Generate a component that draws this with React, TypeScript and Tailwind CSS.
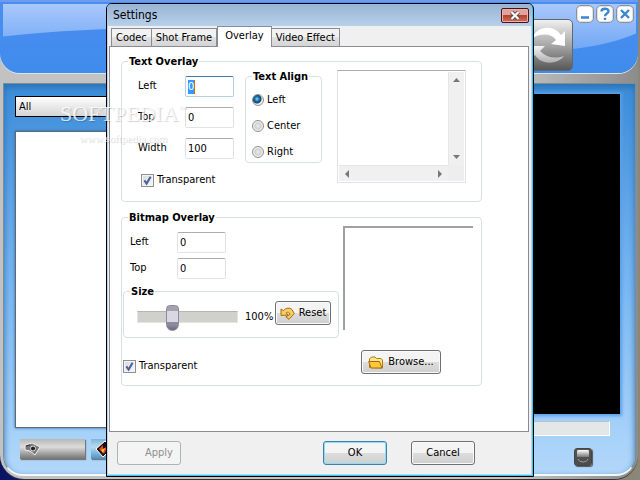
import React, { useState } from 'react';

const TABS = ['Codec', 'Shot Frame', 'Overlay', 'Video Effect'];
const ALIGNS = ['Left', 'Center', 'Right'];

const buttonBase =
  'flex items-center justify-center gap-1 h-6 rounded-[3px] border bg-linear-to-b from-[#f4f4f4] from-50% via-[#dddddd] via-50% to-[#cfcfcf]';
const buttonStyle = `${buttonBase} border-[#707070] shadow-[inset_0_0_0_1px_#fafafa]`;
const defaultButtonStyle = `${buttonBase} border-[#3c7fb1] shadow-[inset_0_0_0_1px_#8fdcf6]`;

interface FieldProps {
  id: string;
  label: string;
  value: string;
  onChange: (value: string) => void;
  active?: boolean;
}

function Field({ id, label, value, onChange, active }: FieldProps) {
  return (
    <div className="flex items-start">
      <label htmlFor={id} className="w-[47px] leading-5">{label}</label>
      <div
        className={
          active
            ? 'flex items-center w-[49px] h-[21px] border border-[#b5cfe7] border-t-[#3d7bad] rounded-[2px] bg-white px-[2px]'
            : 'flex items-center w-[49px] h-[21px] border border-[#dfe3e9] border-t-[#abadb3] rounded-[2px] bg-white px-[2px]'
        }
      >
        <input
          id={id}
          type="text"
          className={
            active
              ? 'w-[7px] h-[14px] outline-none bg-[#3399ff] text-white border-r border-[#c87000]'
              : 'w-full h-[14px] outline-none'
          }
          value={value}
          onChange={(e) => onChange(e.target.value)}
        />
      </div>
    </div>
  );
}

function CheckBox({ id, label }: { id: string; label: string }) {
  const [checked, setChecked] = useState(true);

  return (
    <div className="flex items-center gap-[3px] h-[14px]">
      <span className="relative block size-[13px]">
        <input
          id={id}
          type="checkbox"
          className="block appearance-none size-[13px] border border-[#8e8f8f] bg-linear-to-br from-[#d5d9de] to-[#f8f8f8] shadow-[inset_0_0_0_1px_#f4f4f4]"
          checked={checked}
          onChange={(e) => setChecked(e.target.checked)}
        />
        {checked && (
          <svg viewBox="0 0 13 13" className="absolute inset-0 pointer-events-none" fill="none">
            <path d="M3.4 6.4 L5.6 9.6 L9.6 2.8" stroke="#4a5f97" strokeWidth="2" />
          </svg>
        )}
      </span>
      <label htmlFor={id}>{label}</label>
    </div>
  );
}

function Group({ title, className, children }: { title: string; className: string; children: React.ReactNode }) {
  return (
    <fieldset className={`min-w-0 border border-[#d5dfe5] rounded-[4px] ${className}`}>
      <legend className="ml-[6px] px-px h-[15px] leading-[15px] font-bold">{title}</legend>
      {children}
    </fieldset>
  );
}

function TextOverlay() {
  const [left, setLeft] = useState('0');
  const [top, setTop] = useState('0');
  const [width, setWidth] = useState('100');
  const [align, setAlign] = useState('Left');

  return (
    <Group title="Text Overlay" className="h-[148px]">
      <div className="flex">
        <div className="flex flex-col gap-[10px] pl-4 pt-[7px]">
          <Field id="text-left" label="Left" value={left} onChange={setLeft} active />
          <Field id="text-top" label="Top" value={top} onChange={setTop} />
          <Field id="text-width" label="Width" value={width} onChange={setWidth} />
          <div className="pl-[3px] pt-[4px]">
            <CheckBox id="text-transparent" label="Transparent" />
          </div>
        </div>
        <Group title="Text Align" className="ml-[11px] w-[77px] h-[94px]">
          <div className="flex flex-col gap-[12px] pt-[9px] pl-[6px]">
            {ALIGNS.map((name) => (
              <label key={name} className="flex items-center gap-[3px] h-[14px]">
                <input
                  type="radio"
                  name="text-align"
                  className="appearance-none size-[12px] rounded-full border border-[#8e8f8f] bg-[radial-gradient(circle,#f0f0f0_0,#d0d0d0_3px,#f8f8f8_5px)] checked:bg-[radial-gradient(circle_at_4px_4px,#8fe0ff_0,#1b7fb8_2px,#123f66_4px,#f0f0f0_5px)]"
                  checked={align === name}
                  onChange={() => setAlign(name)}
                />
                {name}
              </label>
            ))}
          </div>
        </Group>
        <div className="ml-[15px] mt-px grid grid-cols-[1fr_16px] grid-rows-[1fr_16px] w-[129px] h-[113px] p-px border border-[#dfe3e9] border-t-[#abadb3]">
          <textarea aria-label="Text" className="resize-none outline-none w-full h-full px-1" />
          <div className="flex flex-col items-center justify-between bg-[#f0f0f0] border-l border-[#e6e6e6] py-[6px]">
            <svg width="7" height="4"><path d="M0 4 L3.5 0 L7 4Z" fill="#777" /></svg>
            <svg width="7" height="4"><path d="M0 0 L3.5 4 L7 0Z" fill="#777" /></svg>
          </div>
          <div className="flex items-center justify-between bg-[#f0f0f0] border-t border-[#e6e6e6] px-[6px]">
            <svg width="4" height="8"><path d="M4 0 L0 4 L4 8Z" fill="#777" /></svg>
            <svg width="4" height="8"><path d="M0 0 L4 4 L0 8Z" fill="#777" /></svg>
          </div>
          <div className="bg-[#eeeeee]" />
        </div>
      </div>
    </Group>
  );
}

function BitmapOverlay() {
  const [left, setLeft] = useState('0');
  const [top, setTop] = useState('0');
  const [size, setSize] = useState(33);

  return (
    <Group title="Bitmap Overlay" className="h-[176px]">
      <div className="flex">
        <div className="w-[217px] pt-[7px]">
          <div className="flex flex-col gap-[5px] pl-2">
            <Field id="bitmap-left" label="Left" value={left} onChange={setLeft} />
            <Field id="bitmap-top" label="Top" value={top} onChange={setTop} />
          </div>
          <Group title="Size" className="ml-px mt-[5px] h-[54px]">
            <div className="flex items-center pl-[13px] pt-[5px]">
              <input
                type="range"
                aria-label="Size"
                className="appearance-none w-[101px] h-[26px] bg-transparent [&::-webkit-slider-runnable-track]:h-[12px] [&::-webkit-slider-runnable-track]:bg-[#d0d0cc] [&::-webkit-slider-runnable-track]:border [&::-webkit-slider-runnable-track]:border-[#e4e4e0] [&::-webkit-slider-runnable-track]:border-t-[#b4b8a8] [&::-webkit-slider-thumb]:appearance-none [&::-webkit-slider-thumb]:w-[13px] [&::-webkit-slider-thumb]:h-[26px] [&::-webkit-slider-thumb]:-mt-[7px] [&::-webkit-slider-thumb]:rounded-t-[4px] [&::-webkit-slider-thumb]:rounded-b-[7px] [&::-webkit-slider-thumb]:border [&::-webkit-slider-thumb]:border-[#8c8a9c] [&::-webkit-slider-thumb]:bg-[linear-gradient(#a3a1b2_0_20%,#d8d8e2_20%_65%,#8c8a9f_65%_80%,#6a6880)]"
                value={size}
                onChange={(e) => setSize(Number(e.target.value))}
              />
              <span className="ml-[7px] w-[30px]">100%</span>
              <button type="button" className={`${buttonStyle} w-[56px] -mt-2`}>
                <svg width="15" height="13" viewBox="0 0 15 13">
                  <path d="M1 2 L3.4 3.6 C6 0.6 10 0.4 12 2.6 L14.3 6.5 L9 12.3 L5.8 9.8 L10 7.4 C9.8 5.2 7.6 4.8 6.2 5.8 L8 8 L1 8.4 Z" fill="#f9cd60" stroke="#a86a10" />
                </svg>
                Reset
              </button>
            </div>
          </Group>
        </div>
        <div className="ml-[4px] mt-px w-[130px]">
          <div className="h-[104px] border-t-2 border-l-2 border-[#a0a0a0]" />
          <button type="button" className={`${buttonStyle} w-[80px] ml-[18px] mt-[20px]`}>
            <svg width="16" height="13" viewBox="0 0 16 13">
              <path d="M1.5 11.5 V3 L3.5 1 H7 L8.5 2.5 H13 L14.5 4 V12 Z" fill="#ffe58a" stroke="#b07a10" />
              <path d="M0.7 5.5 H11.5 L14 12 H3 Z" fill="#ffc83c" stroke="#a86a08" />
            </svg>
            Browse...
          </button>
        </div>
      </div>
      <div className="-mt-[15px] pl-px">
        <CheckBox id="bitmap-transparent" label="Transparent" />
      </div>
    </Group>
  );
}

function SettingsDialog() {
  const [tab, setTab] = useState('Overlay');

  return (
    <div
      role="dialog"
      aria-labelledby="dialog-title"
      className="w-full max-w-[428px] border border-black rounded-t-[6px] bg-[#2fcdf2] pr-px pb-px overflow-hidden"
    >
      <div className="flex flex-col bg-[#bcd4ec] rounded-tr-[5px]">
        <div className="flex items-center justify-between h-[22px] pl-[6px] pr-[3px] bg-linear-to-b from-[#98b4d2] to-[#b8d0ea]">
          <h1 id="dialog-title" className="text-[12px]">Settings</h1>
          <button
            type="button"
            aria-label="Close"
            className="flex items-center justify-center w-[28px] h-[15px] rounded-[2px] border border-[#4a1219] bg-linear-to-b from-[#e0a49c] from-45% via-[#b8402c] via-50% to-[#d0705c] shadow-[inset_0_0_0_1px_#e8b0a8]"
          >
            <svg width="12" height="9" viewBox="0 0 12 9">
              <path d="M2.5 1 L9.5 8 M9.5 1 L2.5 8" stroke="#5a4a50" strokeWidth="4" />
              <path d="M2.5 1 L9.5 8 M9.5 1 L2.5 8" stroke="#fff" strokeWidth="2.2" />
            </svg>
          </button>
        </div>

        <div className="flex flex-col mx-px mb-px bg-[#f0f0f0] px-px">
          <div role="tablist" className="flex items-end h-[20px] pl-[2px]">
            {TABS.map((name) => (
              <button
                key={name}
                type="button"
                role="tab"
                aria-selected={tab === name}
                className={
                  tab === name
                    ? 'relative z-10 h-[21px] -mb-px px-[7px] pb-[2px] bg-white border border-b-0 border-[#898c95]'
                    : 'h-[18px] px-[4px] border border-b-0 -ml-px first:ml-0 border-[#898c95] bg-linear-to-b from-[#f2f2f2] from-50% via-[#e2e2e2] via-50% to-[#d4d4d4]'
                }
                onClick={() => setTab(name)}
              >
                {name}
              </button>
            ))}
          </div>
          <div className="flex flex-col gap-2 border border-[#898c95] bg-white mr-px pl-[11px] pr-[46px] pt-[7px] pb-[45px]">
            <TextOverlay />
            <BitmapOverlay />
          </div>
          <div className="flex items-center h-[42px] pl-2 pr-[55px]">
            <button
              type="button"
              disabled
              className="h-6 w-[64px] pl-5 rounded-[3px] border border-[#adb2b5] bg-[#f4f4f4] text-[#8e8e8e]"
            >
              Apply
            </button>
            <div className="flex-1" />
            <button type="button" className={`${defaultButtonStyle} w-[64px]`}>OK</button>
            <button type="button" className={`${buttonStyle} w-[64px] ml-6`}>Cancel</button>
          </div>
        </div>
      </div>
    </div>
  );
}

const captionStyle =
  'flex items-center justify-center size-[18px] rounded-[5px] border border-[#8a8f98] bg-white shadow-[inset_0_0_0_1px_#dfe3e8]';

function MainWindow() {
  return (
    <div className="flex-1 flex flex-col mr-[2px] mb-px rounded-b-[24px] bg-linear-to-r from-[#c2c2c2] via-[#c4c4c4] via-80% to-[#8c8c8c] shadow-[0_1px_0_#333]">
      <header className="relative flex justify-end gap-[3px] h-[73px] pr-1 pt-[5px] rounded-b-[20px] border-t-2 border-[#6b9cf0] bg-linear-to-b from-[#4a8df0] to-[#3f8cec] shadow-[0_1px_0_#dce4ec] overflow-hidden">
        <svg viewBox="0 0 638 70" preserveAspectRatio="none" className="absolute inset-0 w-full h-full pointer-events-none">
          <defs>
            <linearGradient id="gloss" x1="0" y1="0" x2="0" y2="1">
              <stop offset="0" stopColor="#a9c8fb" />
              <stop offset="1" stopColor="#6ba4f4" />
            </linearGradient>
          </defs>
          <path d="M3 2 H636 V31 C610 42 580 48 500 52 C400 40 200 12 3 34 Z" fill="url(#gloss)" />
        </svg>
        <button
          type="button"
          aria-label="Refresh"
          className="relative flex items-center justify-center size-[52px] mt-[12px] rounded-[5px] border border-[#666] bg-linear-to-b from-[#f0f0f0] via-[#a8a8a8] to-[#585858]"
        >
          <svg width="48" height="48" viewBox="0 0 48 48">
            <defs>
              <linearGradient id="lower-arrow" x1="0" y1="0" x2="0" y2="1">
                <stop offset="0" stopColor="#f4f4f4" />
                <stop offset="1" stopColor="#b0b0b0" />
              </linearGradient>
            </defs>
            <path d="M8 18 C14 5 30 3 38 14 L42 10 V25 L28 23 L33 19 C28 12 17 12 8 18 Z" fill="#fff" />
            <path d="M41 35 C34 44 18 44 12 34 L6 38 V25 H22 L17 30 C24 37 32 38 41 35 Z" fill="url(#lower-arrow)" />
          </svg>
        </button>
        <div className="relative flex gap-[2px] -mt-[2px]">
          <button type="button" aria-label="Minimize" className={captionStyle}>
            <svg width="12" height="12"><path d="M2 9.5 H10" stroke="#3a86d0" strokeWidth="2.4" /></svg>
          </button>
          <button type="button" aria-label="Help" className={captionStyle}>
            <svg width="12" height="14" fill="none">
              <path d="M2.5 4.5 C2.5 0.8 9.5 0.8 9.5 4.3 C9.5 6.6 6 6.4 6 9.2 M6 10.8 V13" stroke="#3a86d0" strokeWidth="2.4" />
            </svg>
          </button>
          <button type="button" aria-label="Exit" className={captionStyle}>
            <svg width="12" height="12"><path d="M2 2 L10 10 M10 2 L2 10" stroke="#3a86d0" strokeWidth="2.4" /></svg>
          </button>
        </div>
      </header>

      <main className="relative flex-1 grid grid-cols-2 gap-5 ml-[3px] mr-[2px] mt-[10px] mb-[3px] pl-[11px] pr-[15px] border border-[#7c8c98] border-b-2 border-b-[#f4f8fc] rounded-b-[20px] bg-linear-to-b from-[#3a8cd8] via-[#78b6f2] to-[#b2d8fa] shadow-[inset_0_3px_6px_#2a70b0]">
        <div className="flex flex-col pt-3 pb-[15px]">
          <select aria-label="Filter" className="appearance-none h-[21px] px-[3px] border border-black bg-linear-to-b from-white to-[#d4d4d4]">
            <option>All</option>
          </select>
          <div className="flex-1 mt-[14px] bg-white border border-[#606870] shadow-[0_0_3px_#2a6aa8]" />
          <div className="flex gap-[6px] mt-[11px] pl-[5px]">
            <button type="button" aria-label="Capture" className="flex items-center h-5 w-[65px] px-1 bg-linear-to-b from-[#b8b8b8] via-[#dcdcdc] via-40% to-[#747474] shadow-[1px_1px_1px_#777]">
              <svg width="18" height="14" viewBox="0 0 18 14">
                <path d="M1 3 L8 1 L16 5 L11 13 L6 9 L1 8 Z" fill="#777" stroke="#eee" />
                <circle cx="9" cy="6.5" r="2.5" fill="#222" stroke="#ddd" />
                <path d="M2 4 L6 3" stroke="#333" />
              </svg>
            </button>
            <button type="button" aria-label="Record" className="flex items-center h-5 w-[65px] px-1 bg-linear-to-b from-[#7fb4d8] via-[#b8dcf0] via-40% to-[#4a90c0] shadow-[1px_1px_1px_#777]">
              <svg width="18" height="18" viewBox="0 0 18 18">
                <path d="M1 9 L10 1 L17 8 L8 17 Z" fill="#1a1010" stroke="#fff" />
                <path d="M4 9 L8 5 L8 9 L13 6 L9 14 Z" fill="#e8481c" />
                <path d="M6 10 L10 8 L8 13 Z" fill="#ffc030" />
              </svg>
            </button>
          </div>
        </div>

        <div className="flex flex-col pt-[10px] pb-[8px]">
          <div className="flex-1 bg-black shadow-[0_0_3px_2px_#5a9fe6]" />
          <div className="h-[15px] mt-[7px] mr-[10px] bg-[#e3e7e8] border border-white border-t-[#b4c4d0]" />
          <div className="flex justify-end mt-[12px] pr-7">
            <button type="button" aria-label="Stop" className="flex items-center justify-center size-[18px] rounded-[3px] border border-[#444] bg-linear-to-b from-[#555] to-[#4c4c4c] shadow-[1px_1px_1px_#555]">
              <svg width="14" height="14" viewBox="0 0 14 14">
                <defs>
                  <linearGradient id="stop-gloss" x1="0" y1="0" x2="0" y2="1">
                    <stop offset="0" stopColor="#fff" />
                    <stop offset="1" stopColor="#777" />
                  </linearGradient>
                </defs>
                <path d="M2 0 H12 Q13 0 13 2 V7 H1 V2 Q1 0 2 0 Z" fill="url(#stop-gloss)" />
                <path d="M2 9 Q3 12 7 12 Q11 12 12 9" fill="none" stroke="#999" />
              </svg>
            </button>
          </div>
        </div>
      </main>
    </div>
  );
}

export default function App() {
  return (
    <div className="relative flex flex-col min-h-screen bg-linear-to-r from-[#0a1464] to-[#8c8878] font-['DejaVu_Sans_Condensed','DejaVu_Sans',sans-serif] text-[11px] leading-[14px] text-black">
      <MainWindow />
      <div className="absolute inset-0 flex items-start justify-center pt-[3px]">
        <SettingsDialog />
      </div>
      <div className="absolute left-[60px] top-[102px] flex flex-col items-center font-['Liberation_Serif',serif] text-white/80 pointer-events-none [text-shadow:1px_1px_1px_#00000030]">
        <span className="text-[22px] leading-6">SOFTPEDIA<sup className="text-[8px] -top-[10px]">™</sup></span>
        <span className="text-[11px] leading-6">www.softpedia.com</span>
      </div>
    </div>
  );
}
